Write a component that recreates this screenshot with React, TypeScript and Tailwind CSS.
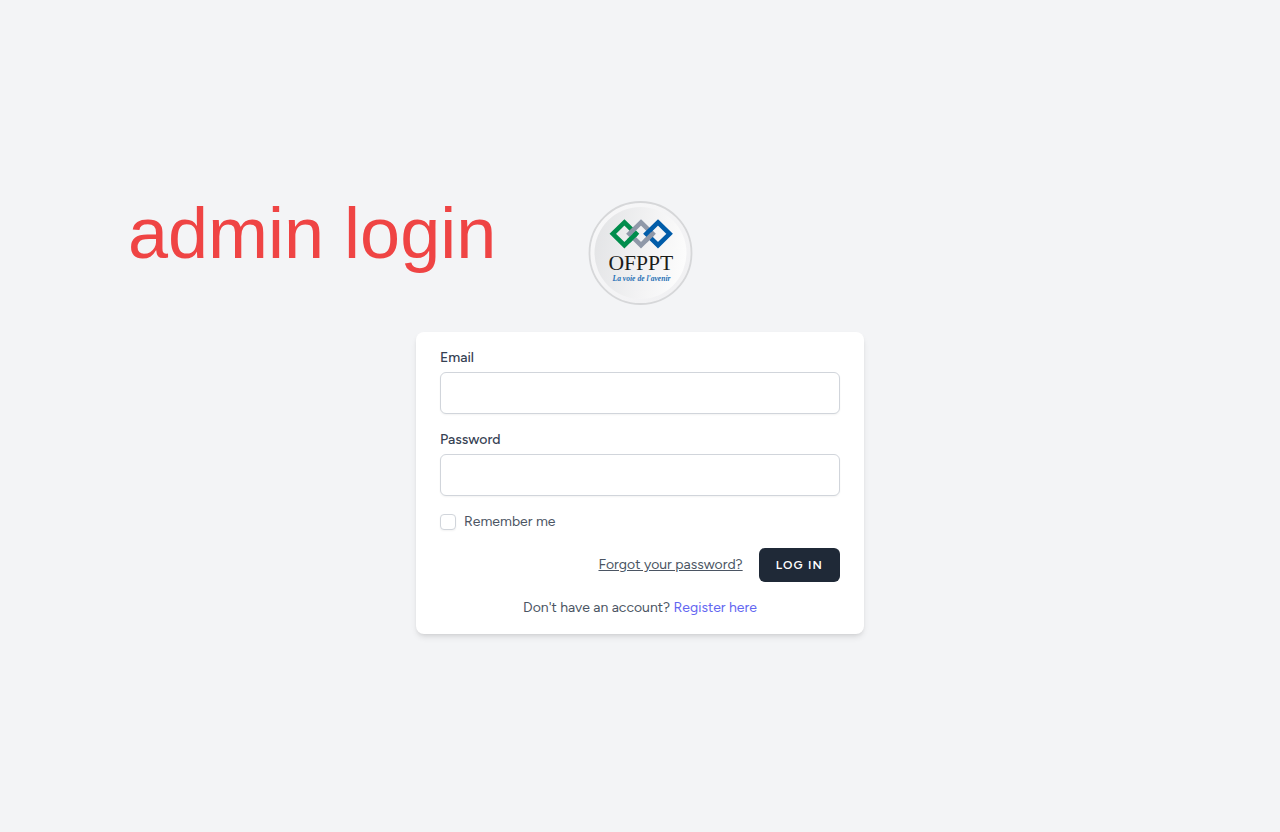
function Logo() {
  return (
    <svg className="block h-[110px] w-[110px]" viewBox="0 0 110 110" role="img" aria-label="OFPPT - La voie de l'avenir">
      <defs>
        <linearGradient id="disc" x1="0" y1="0.3" x2="1" y2="0.5">
          <stop offset="0" stopColor="#e3e4e6" />
          <stop offset="0.6" stopColor="#f3f3f4" />
          <stop offset="1" stopColor="#fcfcfc" />
        </linearGradient>
        <linearGradient id="rim" x1="0" y1="0" x2="1" y2="1">
          <stop offset="0" stopColor="#f8f8f9" />
          <stop offset="1" stopColor="#f0f0f2" />
        </linearGradient>
      </defs>
      <circle cx="55.5" cy="55" r="51" fill="url(#rim)" stroke="#d6d7d9" strokeWidth="1.8" />
      <circle cx="55.5" cy="55" r="46" fill="url(#disc)" />
      <g fill="none" strokeWidth="4.6">
        <path d="M39.4 24.4 51 35.8 39.4 47.2 27.8 35.8Z" stroke="#008d4c" />
        <path d="M56 24.4 67.6 35.8 56 47.2 44.4 35.8Z" stroke="#8f98a8" />
        <path d="M73 24.4 84.6 35.8 73 47.2 61.4 35.8Z" stroke="#005ca9" />
        <path d="M51 35.8 43.5 43.2" stroke="#008d4c" />
        <path d="M67.6 35.8 60.1 43.2" stroke="#8f98a8" />
      </g>
      <text x="23.5" y="72" fontSize="21.6" fill="#1c1c1a" className="font-['Liberation_Serif',serif]">OFPPT</text>
      <text x="27.5" y="83" fontSize="7.6" fontWeight="700" fontStyle="italic" fill="#2670b5" className="font-['Liberation_Serif',serif]">La voie de l'avenir</text>
    </svg>
  );
}

type FieldProps = { id: string; label: string; type: string; autoComplete: string };

function Field({ id, label, type, autoComplete }: FieldProps) {
  return (
    <div>
      <label htmlFor={id} className="block font-medium text-gray-700">{label}</label>
      <input
        id={id}
        name={id}
        type={type}
        autoComplete={autoComplete}
        className="mt-1 block h-[42px] w-full rounded-md border border-[#d1d5db] bg-white px-3 text-base shadow-xs outline-none focus:border-indigo-500 focus:ring-1 focus:ring-indigo-500"
      />
    </div>
  );
}

export default function App() {
  return (
    <main className="flex min-h-screen flex-col items-center justify-center bg-[#f3f4f6] font-['Figtree','Lato',sans-serif] text-sm text-[#4b5563]">
      <header className="flex w-full flex-col items-center lg:grid lg:grid-cols-[1fr_auto_1fr] lg:items-start">
        <h1 className="text-7xl leading-[70px] font-normal text-[#ef4444] lg:pl-32 font-['Liberation_Sans',sans-serif]">admin login</h1>
        <a href="/"><Logo /></a>
      </header>

      <form className="mt-6 flex w-full max-w-md flex-col gap-4 rounded-lg bg-white px-6 py-4 shadow-md" onSubmit={(e) => e.preventDefault()}>
        <Field id="email" label="Email" type="email" autoComplete="username" />
        <Field id="password" label="Password" type="password" autoComplete="current-password" />
        <label htmlFor="remember" className="flex items-center gap-2 self-start">
          <input
            id="remember"
            name="remember"
            type="checkbox"
            className="size-4 appearance-none rounded border border-[#d1d5db] bg-white shadow-xs checked:border-indigo-600 checked:bg-indigo-600"
          />
          Remember me
        </label>
        <div className="flex items-center justify-end gap-4">
          <a href="/forgot-password" className="underline hover:text-gray-900">Forgot your password?</a>
          <button type="submit" className="rounded-md border border-transparent bg-[#1f2937] px-4 py-2 text-xs font-semibold tracking-widest text-white uppercase hover:bg-gray-700">
            Log in
          </button>
        </div>
        <p className="text-center">
          Don't have an account? <a href="/register" className="text-[#6366f1] hover:underline">Register here</a>
        </p>
      </form>
    </main>
  );
}
